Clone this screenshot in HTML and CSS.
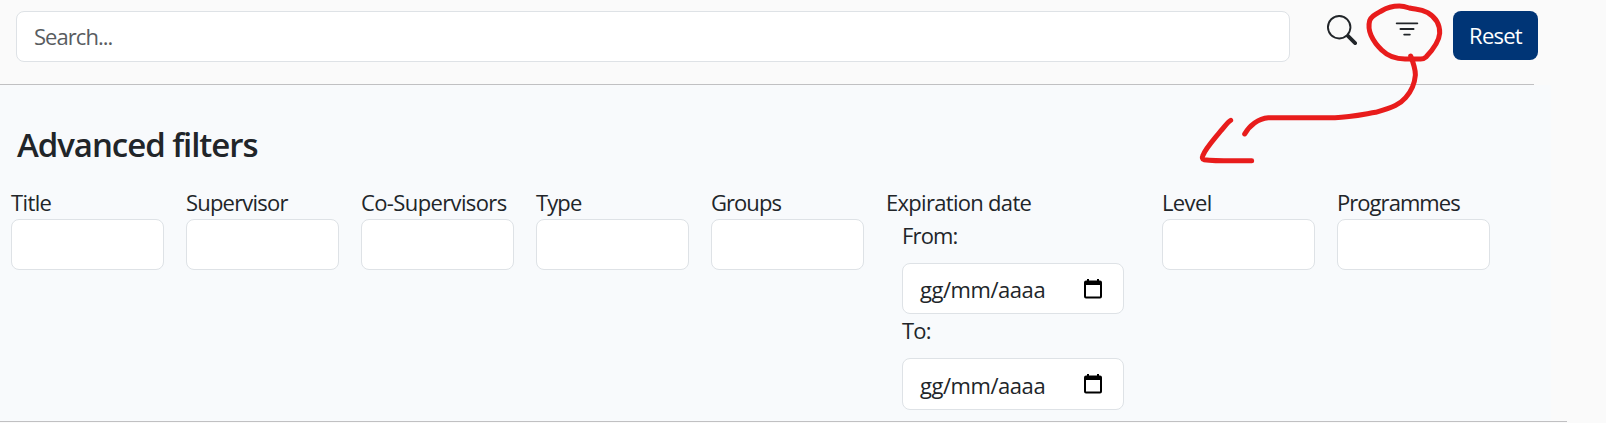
FILE: index.html
```html
<!DOCTYPE html>
<html lang="en">
<head>
<meta charset="utf-8">
<title>Advanced filters</title>
<link rel="stylesheet" href="styles.css">
</head>
<body>
<header class="toolbar">
  <div class="field search"><span class="t-search">Search...</span></div>
  <svg class="icon icon-search" viewBox="0 0 16 16" fill="currentColor"><path d="M11.742 10.344a6.500 6.500 0 1 0-1.397 1.398h-.001q.044.06.098.115l3.850 3.850a1 1 0 0 0 1.415-1.414l-3.850-3.850a1 1 0 0 0-.115-.100zM12 6.500a5.500 5.500 0 1 1-11 0 5.500 5.500 0 0 1 11 0"/></svg>
  <svg class="icon icon-filter" viewBox="0 0 16 16" fill="none" stroke="currentColor" stroke-linecap="round"><path d="M2.500 5.500h11M4.500 8.500h7M6.500 11.500h3"/></svg>
  <div class="reset">Reset</div>
</header>
<div class="rule rule-top"></div>
<section class="panel">
  <h2 class="heading">Advanced filters</h2>
  <div class="filters">
    <div class="col"><span class="label">Title</span><div class="field"></div></div>
    <div class="col"><span class="label supervisor">Supervisor</span><div class="field"></div></div>
    <div class="col"><span class="label">Co-Supervisors</span><div class="field"></div></div>
    <div class="col"><span class="label type">Type</span><div class="field"></div></div>
    <div class="col"><span class="label groups">Groups</span><div class="field"></div></div>
    <div class="col dates">
      <span class="label expiration">Expiration date</span>
      <div class="range">
        <span class="label from">From:</span>
        <div class="field date"><span>gg/mm/aaaa</span><svg class="cal" viewBox="0 0 18 20"><path d="M3 0h2v1.500h8V0h2v1.500h1q2 0 2 2V17.500q0 2-2 2H2q-2 0-2-2V3.500q0-2 2-2h1zM2 6v11.500h14V6z" fill="#000" fill-rule="evenodd"/></svg></div>
        <span class="label to">To:</span>
        <div class="field date date-to"><span>gg/mm/aaaa</span><svg class="cal" viewBox="0 0 18 20"><path d="M3 0h2v1.500h8V0h2v1.500h1q2 0 2 2V17.500q0 2-2 2H2q-2 0-2-2V3.500q0-2 2-2h1zM2 6v11.500h14V6z" fill="#000" fill-rule="evenodd"/></svg></div>
      </div>
    </div>
    <div class="col"><span class="label">Level</span><div class="field"></div></div>
    <div class="col"><span class="label programmes">Programmes</span><div class="field"></div></div>
  </div>
</section>
<div class="rule rule-bottom"></div>
<svg class="scribble" viewBox="0 0 1278 630">
  <path d="M658 18C640 18 622 22 604 33C586 43 574 48 569 62C565 77 568 94 573 106C580 122 592 138 606 151C625 170 645 177 675 177H722Q732 177 738 171C755 153 777 127 779 100C780 75 768 53 743 38C720 25 706 29 688 24Q670 18 658 18Z"/>
  <path d="M692 168C699 186 707 208 706 226C704 250 697 270 677 293C660 313 641 321 587 337C550 343 510 352 465 353H265C235 355 208 377 194 402"/>
  <path d="M152 361C143 366 132 382 122 393C105 415 78 443 69 466Q64 477 72 479C110 484 140 483 215 482"/>
</svg>
</body>
</html>
```

FILE: styles.css
```css
* { box-sizing: border-box; }
body {
  margin: 0;
  width: 1606px;
  height: 423px;
  overflow: hidden;
  background: #fafafa;
  color: #212529;
  font: 22px/33px "Open Sans", "Noto Sans", sans-serif;
  letter-spacing: -0.62px;
}
.toolbar { display: flex; align-items: flex-start; height: 84px; padding: 11px 0 0 16px; }
.field {
  height: 51px;
  background: #fff;
  border: 1px solid #dee2e6;
  border-radius: 8px;
}
.search { width: 1274px; padding: 8px 17px; color: #595c5f; letter-spacing: -0.95px; }
.icon { width: 30px; height: 30px; flex: none; }
.icon-search { margin: 4px 0 0 37px; }
.icon-filter { margin: 2px 0 0 35px; }
.reset {
  width: 85px;
  height: 49px;
  margin-left: 31px;
  padding-top: 8px;
  border-radius: 8px;
  background: #003576;
  color: #fff;
  text-align: center;
  letter-spacing: -0.75px;
}
.rule { height: 1px; background: #c0c0c2; }
.rule-top { width: 1534px; }
.rule-bottom { width: 1567px; }
.panel { width: 1551px; height: 336px; padding: 40px 0 0 11px; background: #f8fafc; }
.heading { margin: 0 0 21px 6px; font-size: 33px; line-height: 40px; font-weight: 600; letter-spacing: -1.05px; }
.filters { display: flex; gap: 22px; }
.col { width: 153px; }
.label { display: block; height: 33px; white-space: nowrap; }
.supervisor { letter-spacing: -0.8px; }
.type { letter-spacing: -0.9px; }
.groups { letter-spacing: -0.95px; }
.expiration { letter-spacing: -0.7px; }
.programmes { letter-spacing: -0.95px; }
.dates { width: 254px; }
.range { padding-left: 16px; }
.from, .to { height: 44px; letter-spacing: -0.85px; }
.date { display: flex; justify-content: space-between; width: 222px; padding: 9px 21px 0 17px; letter-spacing: -0.45px; }
.date-to { height: 52px; padding-top: 10px; }
.cal { width: 18px; height: 20px; margin-top: 6px; }
.date-to .cal { margin-top: 5px; }
.scribble {
  position: absolute;
  left: 1180px;
  top: 0;
  width: 426px;
  height: 210px;
  fill: none;
  stroke: #e81c1c;
  stroke-width: 15;
  stroke-linecap: round;
  stroke-linejoin: round;
}
```
